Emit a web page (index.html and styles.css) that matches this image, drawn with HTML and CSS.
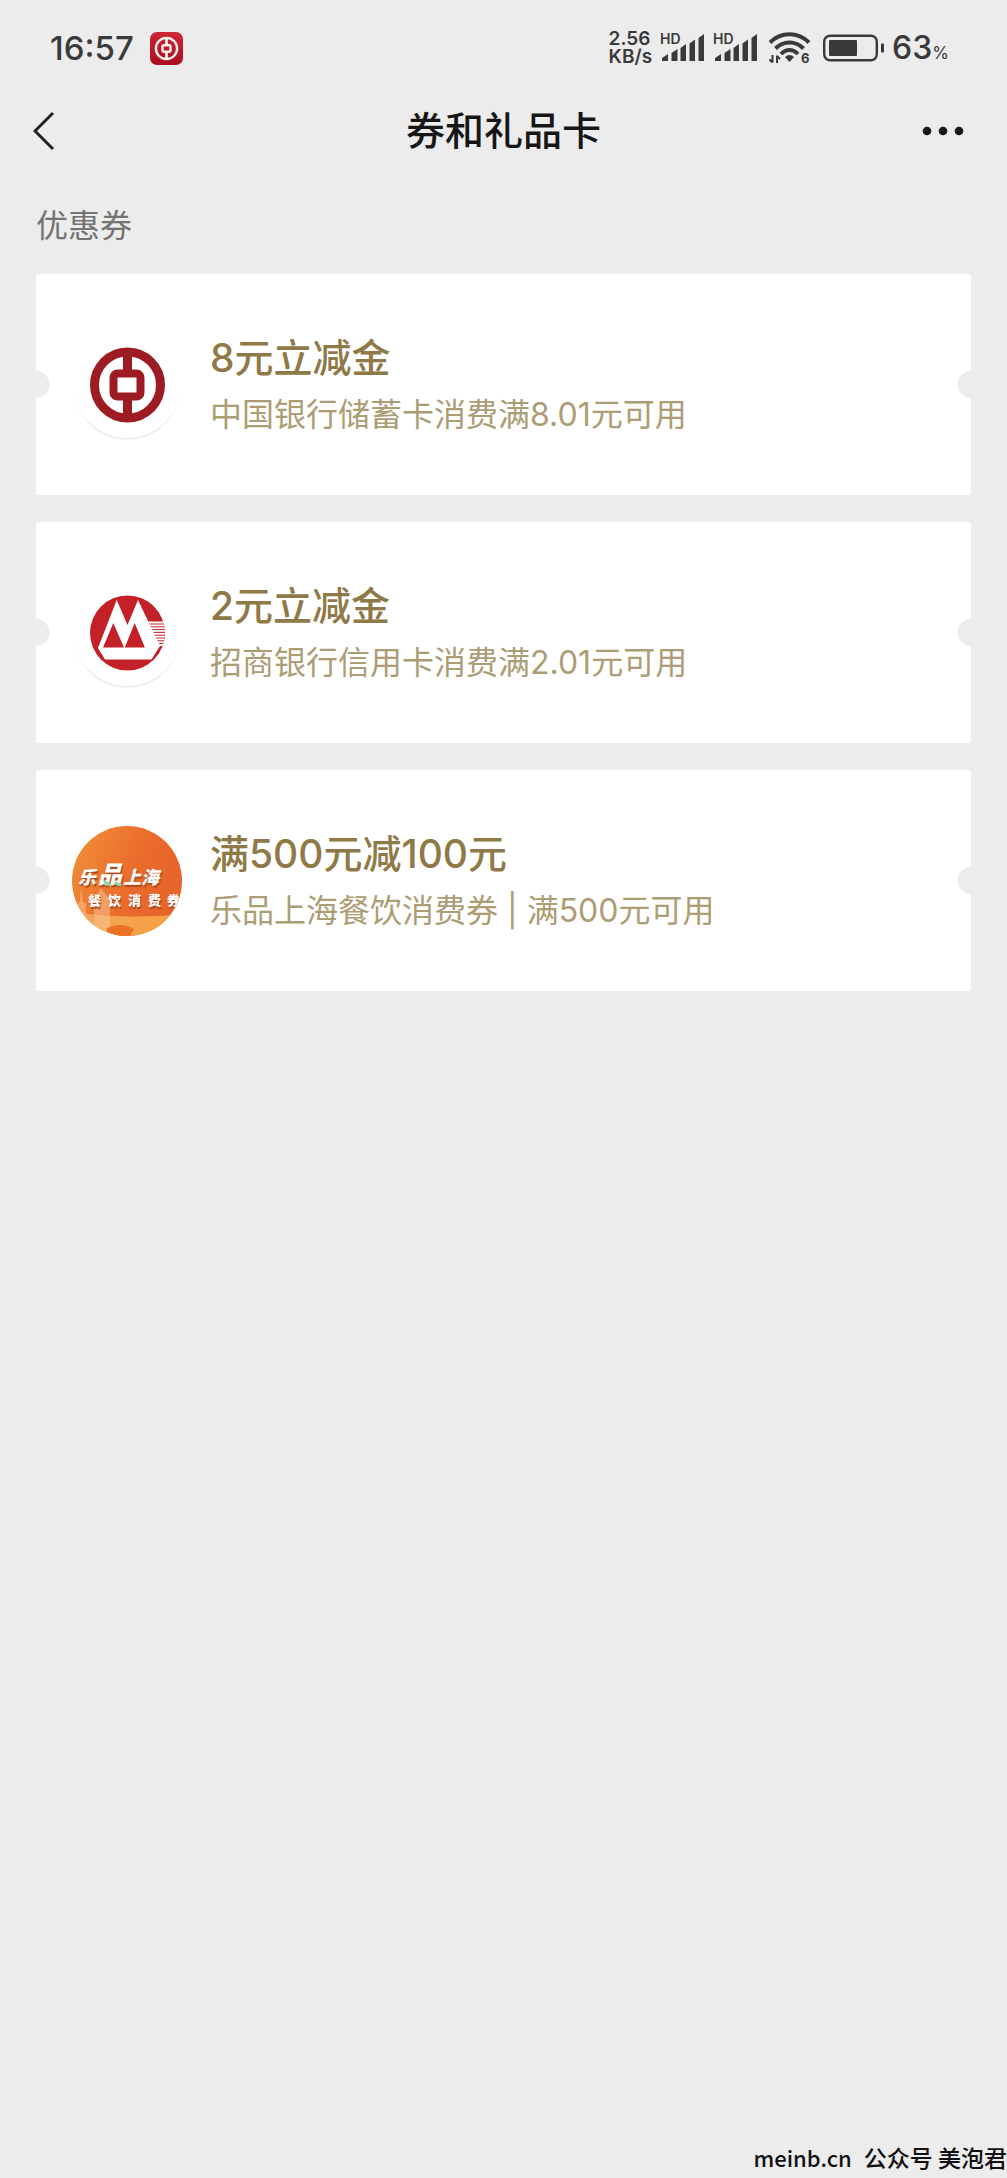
FILE: index.html
```html
<!DOCTYPE html>
<html lang="zh-CN">
<head>
<meta charset="utf-8">
<meta name="viewport" content="width=device-width, initial-scale=1">
<title>券和礼品卡</title>
<link rel="stylesheet" href="styles.css">
</head>
<body>
<div class="status">
  <div class="status-left">
    <span class="time">16:57</span>
    <svg class="app-badge" width="33" height="33" viewBox="0 0 33 33" aria-hidden="true">
      <defs><linearGradient id="badge" x1="0" y1="0" x2="0" y2="1"><stop offset="0" stop-color="#cf2736"/><stop offset="1" stop-color="#ab0c22"/></linearGradient></defs>
      <rect width="33" height="33" rx="7" fill="url(#badge)"/>
      <g fill="none" stroke="#fff3ee" stroke-width="2.4">
        <circle cx="16.500" cy="16.500" r="10.600"/>
        <rect x="12.500" y="13.200" width="8" height="6.600" rx="1.500" stroke-width="2.400"/>
        <path d="M16.500 6v7M16.500 20v7" stroke-width="2.600"/>
      </g>
    </svg>
  </div>
  <div class="status-right">
    <div class="speed"><span>2.56</span><span>KB/s</span></div>
    <svg class="signal" width="45" height="36" viewBox="0 -3 45 36" aria-hidden="true">
      <text x="0" y="11">HD</text>
      <path d="M2 28v-3l6-4v7zM11.500 28V20l6-4v12zM20.500 28V15l5.500-4v17zM29.500 28V10.500l5.500-4V28zM38.500 28V5L44 1v27z"/>
    </svg>
    <svg class="signal" width="45" height="36" viewBox="0 -3 45 36" aria-hidden="true">
      <text x="0" y="11">HD</text>
      <path d="M2 28v-3l6-4v7zM11.500 28V20l6-4v12zM20.500 28V15l5.500-4v17zM29.500 28V10.500l5.500-4V28zM38.500 28V5L44 1v27z"/>
    </svg>
    <svg class="wifi" width="42" height="38" viewBox="0 -3 42 38" aria-hidden="true">
      <g fill="none" stroke="#3a3a3a" stroke-width="4">
        <path d="M1 10.500C12 -.5 29 -.5 40 10.500"/>
        <path d="M6.500 16.500C14.500 8.500 26.500 8.500 34.500 16.500"/>
        <path d="M12 22C17 16.500 24 16.500 29 22"/>
      </g>
      <path d="M16 25q4.500-4 9 0l-4.500 5z"/>
      <path d="M3.500 23v7.500M.5 27.500l3 3M8 31v-7.500M8 24l3 3" fill="none" stroke="#3a3a3a" stroke-width="2"/>
      <text x="32" y="31">6</text>
    </svg>
    <svg class="battery" width="61" height="28" viewBox="0 0 61 28" aria-hidden="true">
      <rect x="1.200" y="1.700" width="52.600" height="24.600" rx="6" fill="none" stroke="#3a3a3a" stroke-width="2.400"/>
      <rect x="6" y="6" width="28" height="16" rx="1"/>
      <rect x="58" y="9.500" width="3" height="9" rx="1"/>
    </svg>
    <div class="level"><span>63</span><small>%</small></div>
  </div>
</div>

<header class="nav">
  <button class="icon-button" type="button" aria-label="返回">
    <svg width="22" height="40" viewBox="0 0 22 40" aria-hidden="true"><path d="M20 2L2 20l18 18" fill="none" stroke="#222" stroke-width="3"/></svg>
  </button>
  <h1>券和礼品卡</h1>
  <button class="icon-button" type="button" aria-label="更多">
    <svg width="52" height="40" viewBox="0 0 52 40" aria-hidden="true"><g fill="#161616"><circle cx="5" cy="20" r="4.300"/><circle cx="21" cy="20" r="4.300"/><circle cx="37" cy="20" r="4.300"/></g></svg>
  </button>
</header>

<main>
  <h2>优惠券</h2>
  <ul class="coupons">
    <li><a class="coupon" href="#boc">
      <svg class="logo" viewBox="0 0 110 110" aria-hidden="true">
        <circle cx="55" cy="56.500" r="53" fill="#e2e2e2"/><circle cx="55" cy="55" r="53.500" fill="#fff"/>
        <g fill="none" stroke="#9d1b22">
          <circle cx="55.500" cy="55" r="33" stroke-width="9"/>
          <rect x="41.500" y="43.500" width="27" height="23" rx="4" stroke-width="8"/>
          <path d="M55.500 22v18M55.500 70v18" stroke-width="9"/>
        </g>
      </svg>
      <div class="info"><h3>8元立减金</h3><p>中国银行储蓄卡消费满8.01元可用</p></div>
    </a></li>
    <li><a class="coupon" href="#cmb">
      <svg class="logo" viewBox="0 0 110 110" aria-hidden="true">
        <defs><clipPath id="disc"><circle cx="55.500" cy="55" r="37.500"/></clipPath></defs>
        <circle cx="55" cy="56.500" r="53" fill="#e2e2e2"/><circle cx="55" cy="55" r="53.500" fill="#fff"/>
        <g clip-path="url(#disc)">
          <path fill="#c32127" d="M0 0h110v110H0z"/>
          <path fill="#fff" d="M74 43.500h20V68H84z"/>
          <path d="M76 46h20M77 48.800h20M78 51.600h20M79 54.400h20M80 57.200h20M82 60h20M83 62.800h20M84 65.600h20" stroke="#c32127" stroke-width="1"/>
          <path fill="#fff" d="M44.700 22L55.500 47 66 22 88 68 79.500 81.500H33L26 70z"/>
          <path fill="#c32127" d="M41.300 45l10.700 24.500H31zM62.700 45l10.200 24.500H52.800z"/>
        </g>
      </svg>
      <div class="info"><h3>2元立减金</h3><p>招商银行信用卡消费满2.01元可用</p></div>
    </a></li>
    <li><a class="coupon" href="#lepin">
      <svg class="logo promo" viewBox="0 0 110 110" role="img" aria-label="乐品上海餐饮消费券">
        <defs>
          <clipPath id="round"><circle cx="55" cy="55" r="55"/></clipPath>
          <linearGradient id="sky" x1="0" y1=".2" x2="1" y2=".6"><stop offset="0" stop-color="#f08d35"/><stop offset=".6" stop-color="#ea6a2c"/><stop offset="1" stop-color="#e6622a"/></linearGradient>
          <linearGradient id="ground" x1="0" y1="0" x2="1" y2="0"><stop offset="0" stop-color="#f2a45c"/><stop offset="1" stop-color="#f7a03c"/></linearGradient>
        </defs>
        <g clip-path="url(#round)">
          <path fill="url(#sky)" d="M0 0h110v110H0z"/>
          <path fill="url(#ground)" d="M0 86q55 8 110 2v24H0z"/>
          <path fill="#f9c79a" opacity=".5" d="M9 60l2 16 3 2v10H5V78l3-2zM22 74l7-12 9 12v36H22z"/>
          <path fill="#ea7226" d="M34 103q14-8 28 0l-4 7H38z"/>
          <g class="promo-face"><text class="promo-name" x="6" y="58">乐</text><text class="promo-big" x="26" y="57">品</text><text class="promo-name" x="51" y="58">上海</text></g>
          <path d="M33 56l5 3M44 57l4 2" stroke="#8fd6a0" stroke-width="3" stroke-linecap="round"/>
          <g class="promo-face promo-line"><text x="16" y="79">餐</text><text x="36" y="79">饮</text><text x="56" y="79">消</text><text x="76" y="79">费</text><text x="95" y="79">券</text></g>
        </g>
      </svg>
      <div class="info"><h3>满500元减100元</h3><p>乐品上海餐饮消费券 | 满500元可用</p></div>
    </a></li>
  </ul>
</main>

<footer><span class="site">meinb.cn</span><span>公众号 美泡君</span></footer>
</body>
</html>
```

FILE: styles.css
```css
* { box-sizing: border-box; }

body {
  display: flex;
  flex-direction: column;
  min-height: 100vh;
  margin: 0;
  background: #ececec;
  color: #161616;
  font-family: Inter, "Noto Sans CJK SC", sans-serif;
}

h1, h2, h3, p, ul { margin: 0; padding: 0; font-weight: 400; }

/* Phone status bar */
.status {
  display: flex;
  align-items: center;
  justify-content: space-between;
  height: 96px;
  padding: 0 58px 0 50px;
  color: #3a3a3a;
}
.status svg { fill: #3a3a3a; }
.status-left, .status-right { display: flex; align-items: center; }
.status-left { gap: 16px; }
.status-right { gap: 8px; }
.time { font-size: 33px; font-weight: 500; line-height: 40px; }
.speed {
  display: flex;
  flex-direction: column;
  font-size: 19px;
  font-weight: 600;
  line-height: 18px;
}
.signal text { font-size: 14px; font-weight: 600; }
.wifi { margin: 0 4px 0 3px; }
.wifi text { font-size: 13px; font-weight: 700; }
.level { display: flex; align-items: baseline; line-height: 40px; }
.level span { font-size: 32px; font-weight: 500; }
.level small { font-size: 17px; line-height: 20px; }

/* Title bar */
.nav {
  display: grid;
  grid-template-columns: 1fr auto 1fr;
  align-items: center;
  height: 70px;
  padding: 0 33px;
}
.nav h1 { font-size: 39px; font-weight: 500; line-height: 56px; }
.icon-button {
  display: flex;
  padding: 0;
  border: 0;
  background: none;
  cursor: pointer;
}
.icon-button:last-child { justify-self: end; }

main { padding: 36px 36px 0; }
main h2 { color: #737373; font-size: 32px; line-height: 48px; }

/* Coupon list */
.coupons {
  display: flex;
  flex-direction: column;
  gap: 27px;
  margin-top: 24px;
  list-style: none;
}
.coupon {
  display: flex;
  align-items: center;
  gap: 28px;
  min-height: 221px;
  padding: 24px 36px;
  border-radius: 3px;
  background:
    radial-gradient(circle at 0 50%, #ececec 13px, transparent 14px),
    radial-gradient(circle at 100% 50%, #ececec 13px, #fff 14px);
  color: #8f7a47;
  text-decoration: none;
}
.logo { flex: none; width: 110px; height: 110px; }
.info h3 { font-size: 39px; font-weight: 500; line-height: 60px; }
.info p { color: #ac9d74; font-size: 32px; line-height: 54px; }

.promo text { font-weight: 900; }
.promo-name { font-size: 18px; font-style: italic; }
.promo-big { font-size: 24px; font-style: italic; }
.promo-face { fill: #fff; text-shadow: 1px 2px 1px #a8481c; }
.promo-line { font-size: 13px; }

footer {
  display: flex;
  align-items: baseline;
  justify-content: flex-end;
  gap: 12px;
  margin-top: auto;
  color: #111;
  font-family: "Noto Sans CJK SC", sans-serif;
  font-size: 23px;
  font-weight: 500;
  line-height: 42px;
  white-space: nowrap;
}
.site { font-size: 22px; }
```
